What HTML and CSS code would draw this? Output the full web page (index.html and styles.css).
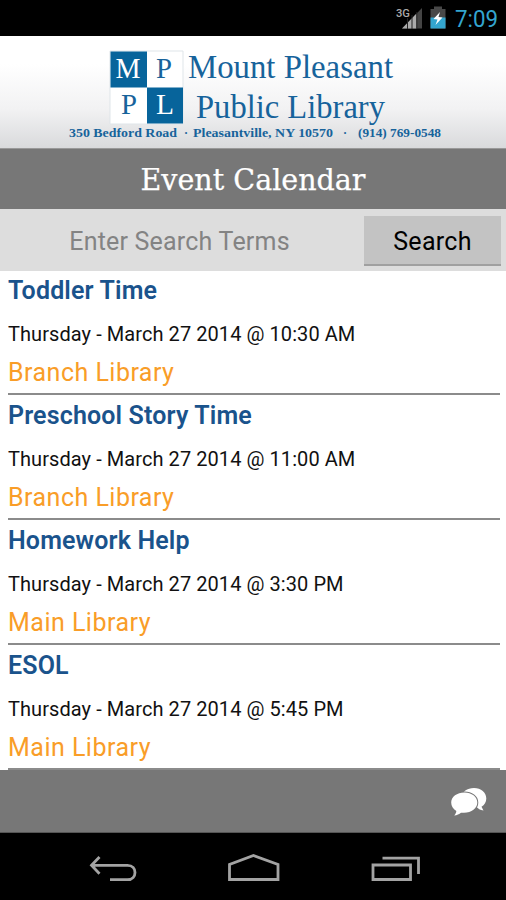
FILE: index.html
```html
<!DOCTYPE html>
<html lang="en">
<head>
<meta charset="utf-8">
<title>Event Calendar</title>
<link rel="stylesheet" href="styles.css">
</head>
<body>
<div class="status">
  <svg width="126" height="36" viewBox="380 0 126 36">
    <text class="net" x="396" y="17" textLength="14" lengthAdjust="spacingAndGlyphs">3G</text>
    <path d="M402 28.500 422 8V28.500Z" fill="#444"/>
    <path d="M402 28.500 416.500 13.500V28.500Z" fill="#aaa"/>
    <path d="M407.500 18V29M412 15V29M416.800 12V29" stroke="#222" stroke-width="1"/>
    <path d="M430.500 9H434V6.500H442V9H445.500V28.500H430.500Z" fill="#484848"/>
    <path d="M430.500 17.500H445.500V28.500H430.500Z" fill="#33a5cf"/>
    <path d="M440 12 433.500 19 437.500 19.500 435.500 25 442.500 17.500 438.500 17Z" fill="#fff"/>
    <text class="clock" x="455" y="27" textLength="43" lengthAdjust="spacingAndGlyphs">7:09</text>
  </svg>
</div>
<header class="brand">
  <svg width="506" height="112" viewBox="0 36 506 112">
    <path d="M110 51H183V124H110Z" fill="#fff" stroke="#dfe5e9" stroke-width="1"/>
    <path d="M110.500 51.500H147V87.500H110.500ZM147 87.500H183V123.500H147Z" fill="#07649b"/>
    <g class="logo">
      <text class="tile light" x="115.500" y="78" textLength="25" lengthAdjust="spacingAndGlyphs">M</text>
      <text class="tile" x="156" y="78" textLength="16" lengthAdjust="spacingAndGlyphs">P</text>
      <text class="tile" x="121" y="114" textLength="16" lengthAdjust="spacingAndGlyphs">P</text>
      <text class="tile light" x="156" y="114" textLength="18" lengthAdjust="spacingAndGlyphs">L</text>
      <text class="name" x="188" y="78" textLength="205" lengthAdjust="spacingAndGlyphs">Mount Pleasant</text>
      <text class="name" x="196" y="118" textLength="189" lengthAdjust="spacingAndGlyphs">Public Library</text>
      <text class="addr" x="69" y="137" textLength="108" lengthAdjust="spacingAndGlyphs">350 Bedford Road</text>
      <text class="addr" x="184" y="137">·</text>
      <text class="addr" x="193" y="137" textLength="140" lengthAdjust="spacingAndGlyphs">Pleasantville, NY 10570</text>
      <text class="addr" x="343" y="137">·</text>
      <text class="addr" x="358" y="137" textLength="83" lengthAdjust="spacingAndGlyphs">(914) 769-0548</text>
    </g>
  </svg>
</header>
<h1 class="heading">
  <svg width="506" height="60" viewBox="0 0 506 60"><text x="140.500" y="41" textLength="225" lengthAdjust="spacingAndGlyphs">Event Calendar</text></svg>
</h1>
<form class="search">
  <input class="field" type="text" placeholder="Enter Search Terms">
  <button class="go" type="button">Search</button>
</form>
<main class="events">
  <article class="event"><h2>Toddler Time</h2><p class="date">Thursday - March 27 2014 @ 10:30 AM</p><p class="place">Branch Library</p></article>
  <article class="event"><h2>Preschool Story Time</h2><p class="date">Thursday - March 27 2014 @ 11:00 AM</p><p class="place">Branch Library</p></article>
  <article class="event"><h2>Homework Help</h2><p class="date">Thursday - March 27 2014 @ 3:30 PM</p><p class="place">Main Library</p></article>
  <article class="event"><h2>ESOL</h2><p class="date">Thursday - March 27 2014 @ 5:45 PM</p><p class="place">Main Library</p></article>
</main>
<footer class="toolbar">
  <svg width="38" height="30" viewBox="450 786 38 30">
    <path d="M474 788C481 788 486.300 792.500 486.300 798.500C486.300 802 484.500 804.800 481.500 806.800L483.500 810.500C480 810 478 808.500 476.500 807C470 807 462 803 462 797C462 791.500 467 788 474 788Z" fill="#fff"/>
    <path d="M464.500 792.500C471.500 792.500 477.300 796.800 477.300 802.600C477.300 808.500 471.500 812.800 464 812.800H461C459.300 814.300 457 815.300 454.200 815.500C455.500 814 456.300 812.700 456.300 811C453 809 451.200 806 451.200 802.600C451.200 796.800 457 792.500 464.500 792.500Z" fill="#fff" stroke="#777" stroke-width="2" paint-order="stroke"/>
  </svg>
</footer>
<nav class="nav">
  <svg width="506" height="67" viewBox="0 833 506 67" fill="none" stroke="#a3a3a3" stroke-width="2.800">
    <path d="M99.500 857 91.500 865.300 99.500 873.700M92 865.300H127.500C137.500 865.300 137.500 879.700 127.500 879.700H110"/>
    <path d="M229.500 879.500V864.500L253.500 855.500 278 864.500V879.500Z"/>
    <path d="M373 865H410.500V879.500H373ZM382.500 858.200H418.500V874"/>
  </svg>
</nav>
</body>
</html>
```

FILE: styles.css
```css
* { box-sizing: border-box; }
body {
  margin: 0;
  width: 506px;
  height: 900px;
  display: flex;
  flex-direction: column;
  overflow: hidden;
  background: #fff;
  font-family: Roboto, "Liberation Sans", sans-serif;
}
svg { display: block; }
h1, h2, p { margin: 0; font-weight: 400; }
.status { height: 36px; background: #000; display: flex; justify-content: flex-end; }
.net { font-size: 11.5px; font-weight: 500; fill: #aaa; }
.clock { font-size: 24px; fill: #33a5cf; }
.brand { height: 112px; background: linear-gradient(#fff 25%, #f2f2f3 65%, #d9dadc); }
.logo { font-family: "Liberation Serif", serif; fill: #17639b; }
.tile { font-size: 29px; }
.light { fill: #fff; }
.name { font-size: 33px; }
.addr { font-size: 12px; font-weight: 700; }
.heading {
  height: 61px;
  background: #777;
  border-top: 1px solid #999;
  font-family: "DejaVu Serif", serif;
  font-size: 30px;
}
.heading text { fill: #fff; stroke: #fff; stroke-width: 0.25px; }
.search {
  height: 62px;
  background: #ddd;
  display: flex;
  align-items: flex-start;
  padding: 7px 5px 0 0;
}
.field {
  flex: 1;
  min-width: 0;
  height: 50px;
  border: 0;
  padding: 1px 5px 0 0;
  background: transparent;
  text-align: center;
  font: 25px Roboto, sans-serif;
  letter-spacing: 0.2px;
}
.field::placeholder { color: #838383; opacity: 1; }
.go {
  width: 137px;
  height: 50px;
  padding: 3px 0 0;
  border: 0;
  border-bottom: 2px solid #a0a0a0;
  background: #c3c3c3;
  color: #000;
  font: 25px Roboto, sans-serif;
  letter-spacing: 0.3px;
}
.events { height: 499px; padding: 0 6px 0 8px; overflow: hidden; }
.event { height: 125px; border-bottom: 2px solid #8b8b8b; }
.event:first-child { margin-top: -1px; }
.event h2 { color: #1a538c; font-size: 25px; font-weight: 600; line-height: 41px; height: 42px; letter-spacing: 0.15px; }
.date { font-size: 20px; line-height: 44px; height: 44px; color: #111; letter-spacing: 0.07px; }
.place { font-size: 25px; line-height: 34px; height: 36px; color: #f99d28; letter-spacing: 0.48px; }
.toolbar { height: 63px; background: #777; border-bottom: 1px solid #555; display: flex; justify-content: flex-end; padding: 16px 18px 0 0; }
.nav { height: 67px; background: #000; }
```
